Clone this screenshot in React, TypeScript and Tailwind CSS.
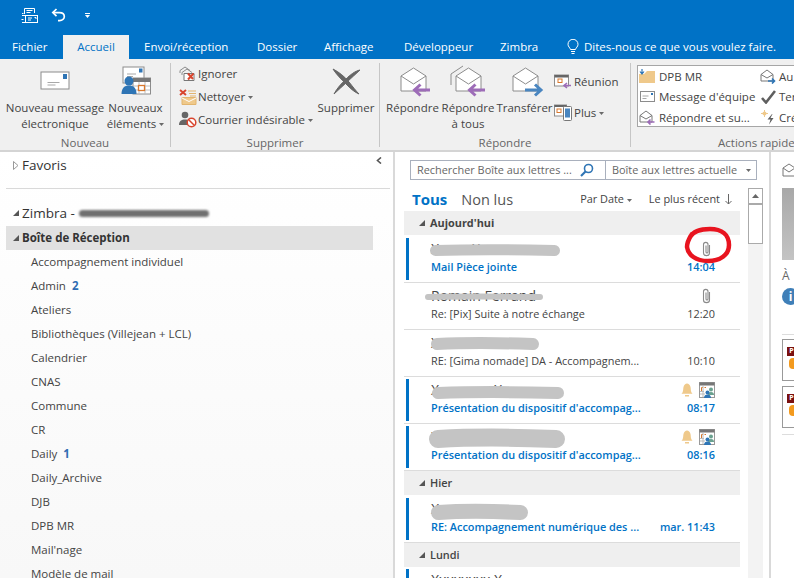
const font = "font-['Open_Sans','Noto_Sans',sans-serif]";

function QuickSend() {
  return (
    <svg width="17" height="17" viewBox="0 0 17 17" fill="none" stroke="#fff" strokeWidth="1">
      <path d="M3.500 7V1.500h10V6M5.500 3.500h6M5.500 5.500h4" />
      <path d="M1 8.500h3M1 6.500h1.500M0.500 12.500h2M1 15.500h3" />
      <rect x="4.500" y="8.500" width="12" height="7" />
      <path d="M7 11h4M7 13h3M13.500 10.500h1.500v1.500" />
    </svg>
  );
}

function Undo() {
  return (
    <svg width="15" height="14" viewBox="0 0 15 14" fill="none" stroke="#fff" strokeWidth="1.700">
      <path d="M5.500 1 1.800 4.600l3.700 3.600" />
      <path d="M2.200 4.600h6.300c3 0 4.800 1.800 4.800 4 0 2.300-2 4-4.800 4H7" />
    </svg>
  );
}

function Caret({ color = "#6a6a6a" }: { color?: string }) {
  return (
    <svg width="5" height="3" viewBox="0 0 5 3" className="inline-block align-middle">
      <path d="M0 0h5L2.500 3z" fill={color} />
    </svg>
  );
}

function NewMail() {
  return (
    <svg width="30" height="19" viewBox="0 0 30 19">
      <rect x="1" y="1" width="28" height="17" fill="#fff" stroke="#8c8c8c" />
      <rect x="23" y="3" width="4" height="5" fill="#2f75b5" />
      <path d="M7.500 11.500h12M7.500 14h8" stroke="#a8a8a8" fill="none" />
    </svg>
  );
}

function NewItems() {
  return (
    <svg width="30" height="29" viewBox="0 0 30 29">
      <rect x="2" y="1" width="21" height="16" fill="#fff" stroke="#8c8c8c" />
      <rect x="18" y="2.500" width="3.500" height="4" fill="#2f75b5" />
      <path d="M6 8h9M6 10.500h6" stroke="#a8a8a8" />
      <rect x="12" y="12" width="17.500" height="16" fill="#fff" stroke="#8c8c8c" />
      <rect x="12" y="12" width="17.500" height="4" fill="#777" />
      <path d="M12 20h17M12 24h17M18 16v12M24 16v12" stroke="#bdbdbd" />
      <rect x="17.500" y="19.500" width="6" height="5" fill="#fff" stroke="#d9782d" strokeWidth="1.300" />
      <circle cx="8" cy="15" r="4.500" fill="#2f75b5" />
      <path d="M0.500 28c0-6 3-8.500 7.500-8.500s7.500 2.500 7.500 8.500z" fill="#2f75b5" />
    </svg>
  );
}

function Ignore() {
  return (
    <svg width="18" height="16" viewBox="0 0 18 16" fill="none">
      <path d="M1 7V4.500L6 1l5 3.500" stroke="#8c8c8c" />
      <path d="M3 9V6.500L8 3l5 3.500" stroke="#8c8c8c" />
      <path d="M5 14.500V7.500h10v7z" fill="#fff" stroke="#777" />
      <path d="M9 7.500 14 13M14.500 7.500 9 13.500" stroke="#d8452e" strokeWidth="2" />
    </svg>
  );
}

function Clean() {
  return (
    <svg width="18" height="16" viewBox="0 0 18 16" fill="none">
      <path d="M3 8.500h14v7H3z" fill="#efc98b" stroke="#e2b56f" />
      <path d="M3 9l7 3.500L17 9" stroke="#fff" />
      <path d="M9 2h8M10 4.500h7M11 7h6" stroke="#e2b56f" />
      <path d="M1 1l6 5M7 1 1 6" stroke="#d8452e" strokeWidth="2" />
    </svg>
  );
}

function Junk() {
  return (
    <svg width="18" height="17" viewBox="0 0 18 17" fill="none">
      <circle cx="6" cy="4" r="3.300" fill="#666" />
      <path d="M0 14c0-4 2.500-5.500 6-5.500S12 10 12 14z" fill="#666" />
      <circle cx="12.500" cy="11.500" r="4.300" fill="#fff" stroke="#d8452e" strokeWidth="1.500" />
      <path d="M9.500 8.500l6 6" stroke="#d8452e" strokeWidth="1.500" />
    </svg>
  );
}

function DeleteX() {
  return (
    <svg width="30" height="28" viewBox="0 0 30 28" fill="none">
      <path d="M2 2c6 3 12 8 16 13s7 9 10 12c-5-2-9-6-13-10S5 7 2 2z" fill="#666" stroke="#666" />
      <path d="M29 3c-5 1-10 5-14 9S6 21 3 27c4-4 9-8 13-12s9-8 13-12z" fill="#666" stroke="#666" />
    </svg>
  );
}

function OpenEnv({ small = false }: { small?: boolean }) {
  return small ? (
    <>
      <path d="M1 5.500 7 1l6 4.500v6.500H1z" fill="#fff" stroke="#777" />
      <path d="M1 5.500 7 9l6-3.500" stroke="#777" fill="none" />
    </>
  ) : (
    <>
      <path d="M1 9 13.500 1 26 9v15H1z" fill="#fff" stroke="#8c8c8c" />
      <path d="M1 9 13.500 17 26 9" stroke="#8c8c8c" fill="none" />
    </>
  );
}

function ReplyIcon({ all, forward }: { all?: boolean; forward?: boolean }) {
  const color = forward ? "#4a86c0" : "#9d6cb8";
  return (
    <svg width="40" height="32" viewBox="-7 0 40 32" fill="none">
      {all && <path d="M-4 20V9L8 1" stroke="#8c8c8c" />}
      <g transform="translate(0 2)">
        <OpenEnv />
      </g>
      {forward ? (
        <path d="M13 25h15M23 19.500l6 5.500-6 5.500" stroke={color} strokeWidth="3" />
      ) : (
        <path d="M30 25H15M20.500 19.500 14.500 25l6 5.500" stroke={color} strokeWidth="3" />
      )}
    </svg>
  );
}

function Meeting() {
  return (
    <svg width="18" height="15" viewBox="0 0 18 15" fill="none">
      <rect x="0.500" y="1" width="14" height="11" fill="#fff" stroke="#8c8c8c" />
      <rect x="0.500" y="1" width="14" height="2.500" fill="#666" />
      <rect x="4" y="5" width="4" height="3.500" stroke="#d9782d" />
      <path d="M17 11.500h-6M13 9l-3 2.500 3 2.500" stroke="#9d6cb8" strokeWidth="1.600" />
    </svg>
  );
}

function More() {
  return (
    <svg width="18" height="17" viewBox="0 0 18 17" fill="none">
      <rect x="0.500" y="1" width="12" height="11" fill="#fff" stroke="#8c8c8c" />
      <rect x="0.500" y="1" width="12" height="2" fill="#666" />
      <rect x="3" y="5" width="4" height="3.500" stroke="#d9782d" />
      <rect x="9.500" y="2.500" width="8" height="14" rx="1" fill="#fff" stroke="#777" />
      <rect x="11" y="4.500" width="5" height="9" fill="#4a86c0" />
    </svg>
  );
}

function QuickIcon({ kind }: { kind: string }) {
  if (kind === "folder")
    return (
      <svg width="16" height="15" viewBox="0 0 16 15">
        <path d="M0 14V5h5l3-3h8v12z" fill="#efc98b" />
        <path d="M3 0v4M1 2.500 3 5l2-2.500" stroke="#2f75b5" strokeWidth="1.200" fill="none" />
      </svg>
    );
  if (kind === "team")
    return (
      <svg width="15" height="12" viewBox="0 0 15 12" fill="none">
        <rect x="0.500" y="0.500" width="14" height="10" fill="#fff" stroke="#8c8c8c" />
        <rect x="11" y="2" width="2" height="2" fill="#2f75b5" />
        <path d="M2.500 5h6M2.500 7.500h4" stroke="#a8a8a8" />
      </svg>
    );
  if (kind === "reply" || kind === "move")
    return (
      <svg width="16" height="15" viewBox="0 0 16 15" fill="none">
        <OpenEnv small />
        {kind === "reply" ? (
          <path d="M15.500 12H9M11.500 9.500 9 12l2.500 2.500" stroke="#9d6cb8" strokeWidth="1.600" />
        ) : (
          <path d="M8 12h6.500M12 9.500l2.500 2.500-2.500 2.500" stroke="#2f75b5" strokeWidth="1.600" />
        )}
      </svg>
    );
  if (kind === "check")
    return (
      <svg width="15" height="14" viewBox="0 0 15 14" fill="none">
        <path d="M1 8l4 4.500L14 1" stroke="#5f5f5f" strokeWidth="2.600" />
      </svg>
    );
  return (
    <svg width="15" height="15" viewBox="0 0 15 15" fill="none">
      <circle cx="3.500" cy="3.500" r="2" fill="#efc98b" />
      <path d="M3.500 0v7M0 3.500h7" stroke="#efc98b" />
      <path d="M11 4 6.500 9.500h3L8 14.500l4.500-6.500h-3l2-4z" fill="#5f5f5f" />
    </svg>
  );
}

function BigButton({ icon, lines, w }: { icon: React.ReactNode; lines: React.ReactNode[]; w: string }) {
  return (
    <div className={`flex flex-col items-center ${w}`}>
      <div className="flex h-[33px] items-center justify-center">{icon}</div>
      <div className="mt-[3px] text-center leading-[16px] whitespace-nowrap">
        {lines.map((l, i) => (
          <div key={i}>{l}</div>
        ))}
      </div>
    </div>
  );
}

function SmallRow({ icon, children }: { icon: React.ReactNode; children: React.ReactNode }) {
  return (
    <div className="flex h-[23px] items-center gap-[1px] whitespace-nowrap">
      <div className="flex w-[19px] justify-center">{icon}</div>
      {children}
    </div>
  );
}

function Group({ label, w, children }: { label: string; w: string; children: React.ReactNode }) {
  return (
    <div className={`relative flex h-full shrink-0 flex-col border-r border-[#c6c6c6] my-[4px] ${w}`}>
      <div className="flex flex-1 min-h-0">{children}</div>
      <div className="-mb-[3px] text-center text-[11.500px] leading-[14px] text-[#666]">{label}</div>
    </div>
  );
}

function Ribbon() {
  return (
    <div className="flex h-[93px] shrink-0 overflow-hidden border-b-2 border-[#d4d4d4] bg-[#f0f0f0] text-[11.500px] text-[#444]">
      <div className="flex h-[84px]">
        <Group label="Nouveau" w="w-[171px]">
          <div className="flex pt-[1px] pl-[6px]">
            <BigButton icon={<NewMail />} lines={["Nouveau message", "électronique"]} w="w-[98px]" />
            <div className="ml-[1px]">
              <BigButton
                icon={<NewItems />}
                lines={["Nouveaux", <span key="c">éléments <Caret /></span>]}
                w="w-[61px]"
              />
            </div>
          </div>
        </Group>
        <Group label="Supprimer" w="w-[209px]">
          <div className="flex">
            <div className="-mt-[1px] pl-[7px]">
              <SmallRow icon={<Ignore />}>Ignorer</SmallRow>
              <SmallRow icon={<Clean />}>
                <span>Nettoyer <Caret /></span>
              </SmallRow>
              <SmallRow icon={<Junk />}>
                <span>Courrier indésirable <Caret /></span>
              </SmallRow>
            </div>
            <div className="ml-[5px] pt-[1px]">
              <BigButton icon={<DeleteX />} lines={["Supprimer"]} w="w-[56px]" />
            </div>
          </div>
        </Group>
        <Group label="Répondre" w="w-[251px]">
          <div className="flex pt-[1px] pl-[5px]">
            <BigButton icon={<ReplyIcon />} lines={["Répondre"]} w="w-[55px]" />
            <BigButton icon={<ReplyIcon all />} lines={["Répondre", "à tous"]} w="w-[56px]" />
            <BigButton icon={<ReplyIcon forward />} lines={["Transférer"]} w="w-[57px]" />
            <div className="pt-[6px]">
              <SmallRow icon={<Meeting />}>
                <span className="ml-[1px]">Réunion</span>
              </SmallRow>
              <div className="h-[8px]" />
              <SmallRow icon={<More />}>
                <span className="ml-[1px]">Plus <Caret /></span>
              </SmallRow>
            </div>
          </div>
        </Group>
        <div className="my-[4px] flex h-full w-[200px] shrink-0 flex-col pl-[6px]">
          <div className="mt-[2px] flex h-[62px] w-[200px] border border-[#a6a6a6] bg-white">
            <div className="w-[122px] pl-[1px]">
              {[
                ["folder", "DPB MR"],
                ["team", "Message d'équipe"],
                ["reply", "Répondre et su..."],
              ].map(([k, t]) => (
                <div key={k} className="flex h-[20.500px] items-center gap-[4px] whitespace-nowrap">
                  <div className="flex w-[16px] justify-center">
                    <QuickIcon kind={k} />
                  </div>
                  {t}
                </div>
              ))}
            </div>
            <div>
              {[
                ["move", "Au"],
                ["check", "Ter"],
                ["spark", "Cré"],
              ].map(([k, t]) => (
                <div key={k} className="flex h-[20.500px] items-center gap-[3px] whitespace-nowrap">
                  <div className="flex w-[16px] justify-center">
                    <QuickIcon kind={k} />
                  </div>
                  {t}
                </div>
              ))}
            </div>
          </div>
          <div className="mt-[9px] pl-[81px] text-[11.500px] leading-[14px] whitespace-nowrap text-[#666]">
            Actions rapides
          </div>
        </div>
      </div>
    </div>
  );
}

function TitleBar() {
  const tabs: [string, string][] = [
    ["Envoi/réception", "ml-[15px] w-[113px]"],
    ["Dossier", "w-[67px]"],
    ["Affichage", "w-[80px]"],
    ["Développeur", "w-[96px]"],
    ["Zimbra", "w-[67px]"],
  ];
  return (
    <div className="h-[59px] shrink-0 bg-[#0072c6] text-[11.500px] text-white">
      <div className="flex h-[35px] items-center pb-[5px]">
        <div className="ml-[21px]">
          <QuickSend />
        </div>
        <div className="ml-[13px]">
          <Undo />
        </div>
        <div className="ml-[19px] flex flex-col items-center gap-[1px]">
          <div className="h-[1px] w-[5px] bg-white" />
          <Caret color="#fff" />
        </div>
      </div>
      <div className="flex h-[24px] items-center whitespace-nowrap">
        <div className="ml-[12px] w-[51px]">Fichier</div>
        <div className="flex h-full w-[66px] items-center justify-center bg-[#f0f0f0] text-[#0072c6]">Accueil</div>
        {tabs.map(([t, c]) => (
          <div key={t} className={c}>
            {t}
          </div>
        ))}
        <div className="flex items-center gap-[5px]">
          <svg width="12" height="16" viewBox="0 0 12 16" fill="none" stroke="#fff">
            <path d="M3.500 10.500C3 8.500 1 7.800 1 5.300a5 5 0 0 1 10 0c0 2.500-2 3.200-2.500 5.200z" />
            <path d="M4 12.500h4M4.500 14.500h3" />
          </svg>
          Dites-nous ce que vous voulez faire.
        </div>
      </div>
    </div>
  );
}

const folders: [string, string?][] = [
  ["Accompagnement individuel"],
  ["Admin", "2"],
  ["Ateliers"],
  ["Bibliothèques (Villejean + LCL)"],
  ["Calendrier"],
  ["CNAS"],
  ["Commune"],
  ["CR"],
  ["Daily", "1"],
  ["Daily_Archive"],
  ["DJB"],
  ["DPB MR"],
  ["Mail'nage"],
  ["Modèle de mail"],
];

function Tri({ open }: { open?: boolean }) {
  return open ? (
    <svg width="6" height="6" viewBox="0 0 6 6">
      <path d="M6 0v6H0z" fill="#555" />
    </svg>
  ) : (
    <svg width="6" height="9" viewBox="0 0 6 9" fill="none">
      <path d="M0.500 0.500 5 4.500 0.500 8.500z" stroke="#999" />
    </svg>
  );
}

function FolderPane() {
  return (
    <div className="h-full w-[395px] shrink-0 overflow-hidden border-r-2 border-[#d9d9d9] bg-gradient-to-b from-white to-[#f8f8f8] text-[11.500px] text-[#444]">
      <div className="flex h-[27px] items-center pl-[13px] text-[13.500px] text-[#333]">
        <Tri />
        <span className="ml-[3px]">Favoris</span>
        <svg width="6" height="7" viewBox="0 0 6 7" className="ml-auto mr-[11px] mb-[10px]" fill="none">
          <path d="M5 0.500 1.500 3.500 5 6.500" stroke="#555" strokeWidth="1.600" />
        </svg>
      </div>
      <div className="mx-[6px] mt-[9px] w-[384px] border-t border-[#d9d9d9]" />
      <div className="relative mt-[12px] flex h-[24px] items-center pl-[13px] text-[13.500px] text-[#333]">
        <Tri open />
        <span className="ml-[3px]">Zimbra -</span>
        <span className="ml-[4px] h-[7px] w-[130px] rounded-full bg-[#707070] blur-[1px]" />
      </div>
      <div className="mt-[1px] ml-[6px] flex h-[24px] w-[367px] items-center bg-[#e1e1e1] pl-[7px] font-bold text-[#333]">
        <Tri open />
        <span className="ml-[3px]">Boîte de Réception</span>
      </div>
      {folders.map(([name, count]) => (
        <div key={name} className="flex h-[24px] items-center pl-[31px] whitespace-nowrap">
          {name}
          {count && <span className="ml-[6px] font-bold text-[#2f6db3]">{count}</span>}
        </div>
      ))}
    </div>
  );
}

function Clip() {
  return (
    <svg width="11" height="16" viewBox="0 0 11 16" fill="none" stroke="#8a8a8a" strokeWidth="1.100">
      <path d="M8.500 4v8c0 3.500-6 3.500-6 0V3.500c0-2.800 4.500-2.800 4.500 0V11c0 1.300-2 1.300-2 0V4.500" />
    </svg>
  );
}

function Bell() {
  return (
    <svg width="14" height="15" viewBox="0 0 14 15">
      <path d="M2.500 10.500c1-2 .5-3.500 1-5.500C4 3 5.500 1.500 7 1.500S10 3 10.500 5c.5 2 0 3.500 1 5.500l1 1.200h-11z" fill="#efc98b" />
      <rect x="5" y="13" width="4" height="1.500" fill="#efc98b" />
    </svg>
  );
}

function CalPeople() {
  return (
    <svg width="16" height="16" viewBox="0 0 16 16" fill="none">
      <rect x="0.500" y="0.500" width="15" height="15" fill="#fff" stroke="#999" />
      <rect x="0.500" y="0.500" width="15" height="3" fill="#777" />
      <path d="M4 5.500H2.500V9M5.500 5.500H7" stroke="#d9782d" />
      <path d="M1 12h5M1 9.500h4M4 4v11" stroke="#bbb" />
      <circle cx="12" cy="7.500" r="2" fill="#6aa18f" />
      <path d="M9 13c0-2 1-3 3-3s3 1 3 3z" fill="#6aa18f" />
      <circle cx="8.500" cy="10.500" r="2" fill="#2f75b5" />
      <path d="M5 16c0-2.500 1.500-3.500 3.500-3.500S12 13.500 12 16z" fill="#2f75b5" />
    </svg>
  );
}

function Scribble({ left, top, w, h }: { left: string; top: string; w: number; h: number }) {
  return (
    <svg
      width={w}
      height={h}
      viewBox={`0 0 ${w} ${h}`}
      className={`absolute ${left} ${top} overflow-visible blur-[0.600px]`}
      fill="none"
      stroke="#c4c4c4"
      strokeLinecap="round"
    >
      <path d={`M${h / 2} ${h / 2}C${w * 0.3} ${h * 0.4} ${w * 0.6} ${h * 0.4} ${w - h / 2} ${h / 2}`} strokeWidth={h} />
    </svg>
  );
}

type Mail = {
  sender: string;
  subject: string;
  time: string;
  unread?: boolean;
  clip?: boolean;
  meeting?: boolean;
  tall?: boolean;
  scribble: React.ReactNode;
};

function MailRow({ m }: { m: Mail }) {
  const sub = `mt-[1px] text-[10.900px] leading-[16px] whitespace-nowrap ${m.unread ? "font-semibold text-[#0072c6]" : "text-[#444]"}`;
  return (
    <div className={`relative flex shrink-0 border-b border-[#dcdcdc] bg-white ${m.tall ? "h-[48px]" : "h-[47px]"}`}>
      <div className={`ml-[2px] h-[42px] w-[3px] ${m.tall ? "mt-[3px]" : "mt-[2px]"} ${m.unread ? "bg-[#0072c6]" : ""}`} />
      <div className={`ml-[22px] flex-1 min-w-0 ${m.tall ? "pt-[4px]" : "pt-[3px]"}`}>
        <div className="h-[19px] text-[14px] leading-[19px] whitespace-nowrap text-[#444]">{m.sender}</div>
        <div className={sub}>{m.subject}</div>
      </div>
      <div className={`mr-[25px] flex flex-col items-end ${m.tall ? "pt-[4px]" : "pt-[3px]"}`}>
        <div className="flex h-[19px] items-center gap-[5px]">
          {m.clip && (
            <div className="mr-[3px]">
              <Clip />
            </div>
          )}
          {m.meeting && (
            <>
              <Bell />
              <CalPeople />
            </>
          )}
        </div>
        <div className={sub}>{m.time}</div>
      </div>
      {m.scribble}
    </div>
  );
}

function DayHeader({ label, bold }: { label: string; bold?: boolean }) {
  return (
    <div className={`flex h-[24px] shrink-0 items-center bg-[#efefef] pl-[15px] text-[10.900px] text-[#444] ${bold ? "font-bold" : "font-semibold"}`}>
      <Tri open />
      <span className="ml-[5px]">{label}</span>
    </div>
  );
}

function MailPane() {
  const today: Mail[] = [
    {
      sender: "Xxxxx Xxxxxxx",
      subject: "Mail Pièce jointe",
      time: "14:04",
      unread: true,
      clip: true,
      tall: true,
      scribble: <Scribble left="left-[26px]" top="top-[10px]" w={130} h={11} />,
    },
    {
      sender: "Romain Ferrand",
      subject: "Re: [Pix] Suite à notre échange",
      time: "12:20",
      clip: true,
      scribble: <Scribble left="left-[21px]" top="top-[11px]" w={118} h={6} />,
    },
    {
      sender: "Xxxxxxx Xxxxx",
      subject: "RE: [Gima nomade] DA - Accompagnem...",
      time: "10:10",
      scribble: <Scribble left="left-[27px]" top="top-[8px]" w={108} h={12} />,
    },
    {
      sender: "Xxxxxxxx Xxxxx",
      subject: "Présentation du dispositif d'accompag...",
      time: "08:17",
      unread: true,
      meeting: true,
      scribble: <Scribble left="left-[28px]" top="top-[10px]" w={132} h={12} />,
    },
    {
      sender: "Xxxxxxxx Xxxxx",
      subject: "Présentation du dispositif d'accompag...",
      time: "08:16",
      unread: true,
      meeting: true,
      scribble: <Scribble left="left-[25px]" top="top-[6px]" w={136} h={18} />,
    },
  ];
  const yesterday: Mail = {
    sender: "Xxxxx Xxxxx",
    subject: "RE: Accompagnement numérique des ...",
    time: "mar. 11:43",
    unread: true,
    tall: true,
    scribble: <Scribble left="left-[27px]" top="top-[10px]" w={97} h={15} />,
  };
  return (
    <div className="relative flex h-full w-[374px] shrink-0 flex-col overflow-hidden bg-white pl-[9px] text-[#444]">
      <div className="mt-[8px] ml-[6px] flex h-[20px] w-[347px] shrink-0 items-center border border-[#a9b0bd] text-[10.900px] text-[#666]">
        <div className="flex w-[194px] items-center justify-between pl-[6px] pr-[11px] whitespace-nowrap">
          Rechercher Boîte aux lettres ...
          <svg width="14" height="14" viewBox="0 0 14 14" fill="none" stroke="#2f75b5" strokeWidth="1.600">
            <circle cx="8.500" cy="5.500" r="4" />
            <path d="M5.500 8.500 1 13" strokeWidth="2.200" />
          </svg>
        </div>
        <div className="flex h-full flex-1 items-center justify-between border-l border-[#a9b0bd] pl-[6px] pr-[5px] whitespace-nowrap">
          Boîte aux lettres actuelle
          <Caret />
        </div>
      </div>
      <div className="flex flex-1 min-h-0">
        <div className="w-[336px] shrink-0">
          <div className="flex h-[31px] items-center pt-[8px] pl-[8px] pr-[8px]">
            <span className="text-[15px] font-bold text-[#0072c6]">Tous</span>
            <span className="ml-[14px] text-[14.500px] text-[#555]">Non lus</span>
            <span className="ml-auto text-[10.900px]">
              Par Date <Caret />
            </span>
            <span className="ml-[17px] flex items-center gap-[5px] text-[10.900px]">
              Le plus récent
              <svg width="7" height="11" viewBox="0 0 7 11" fill="none" stroke="#666">
                <path d="M3.500 0v10M0.500 7l3 3 3-3" />
              </svg>
            </span>
          </div>
          <DayHeader label="Aujourd'hui" bold />
          {today.map((m) => (
            <MailRow key={m.time} m={m} />
          ))}
          <DayHeader label="Hier" />
          <MailRow m={yesterday} />
          <DayHeader label="Lundi" />
          <MailRow
            m={{
              sender: "Xxxxxxxx X",
              subject: "",
              time: "",
              unread: true,
              scribble: null,
            }}
          />
        </div>
        <div className="mt-[8px] ml-[8px] flex w-[15px] shrink-0 flex-col bg-[#f3f3f3]">
          <div className="flex h-[16px] items-center justify-center border border-[#aaa] bg-white">
            <svg width="7" height="4" viewBox="0 0 7 4">
              <path d="M3.500 0 7 4H0z" fill="#666" />
            </svg>
          </div>
          <div className="h-[40px] border border-[#aaa] bg-white" />
        </div>
      </div>
      {/* red circle drawn by hand over the attachment icon */}
      <svg width="52" height="42" viewBox="0 0 52 42" fill="none" className="absolute left-[287px] top-[73px]">
        <path
          d="M8 12C12 5 20 4 28 4 40 4 47 10 47 20 47 30 38 36 26 36 14 36 6 30 5 22 5 16 8 12 10 9"
          stroke="#e8141f"
          strokeWidth="4.500"
          strokeLinecap="round"
        />
      </svg>
    </div>
  );
}

function ReadingPane() {
  const thumb = (
    <div className="h-[42px] w-[20px] border border-[#999] bg-white pt-[7px] pl-[4px]">
      <div className="flex h-[9px] w-[9px] items-center justify-center bg-[#7a1010] text-[7px] font-bold text-white">P</div>
      <div className="mt-[2px] ml-[2px] h-[11px] w-[8px] rounded-full bg-[#f39a1e]" />
    </div>
  );
  return (
    <div className="h-full flex-1 overflow-hidden border-l-2 border-[#d9d9d9] bg-white pl-[11px]">
      <div className="mt-[11px]">
        <svg width="14" height="14" viewBox="0 0 14 14" fill="none" stroke="#777">
          <path d="M1 5 7 1l6 4v8H1zM1 5l6 4 6-4" />
        </svg>
      </div>
      <div className="mt-[11px] h-[72px] w-[14px] bg-gradient-to-b from-[#a8a8a8] to-[#c4c4c4]" />
      <div className="mt-[8px] text-[12px] leading-[16px] text-[#666]">À</div>
      <div className="mt-[4px] flex h-[17px] w-[17px] items-center justify-center rounded-full bg-[#3f7fb8] text-[12px] font-bold text-white">
        i
      </div>
      <div className="mt-[29px] w-[14px] border-t border-[#ddd]" />
      <div className="mt-[4px]">{thumb}</div>
      <div className="mt-[5px]">{thumb}</div>
      <div className="mt-[6px] w-[14px] border-t border-[#ddd]" />
    </div>
  );
}

export default function App() {
  return (
    <div className={`flex h-[578px] w-[794px] flex-col overflow-hidden bg-white ${font}`}>
      <TitleBar />
      <Ribbon />
      <div className="flex h-[426px] min-h-0">
        <FolderPane />
        <MailPane />
        <ReadingPane />
      </div>
    </div>
  );
}
